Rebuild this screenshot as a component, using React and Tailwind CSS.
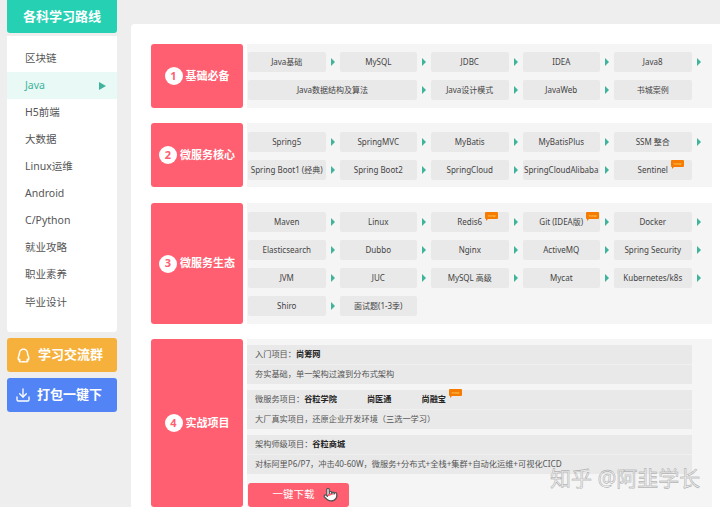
import { Download, Pointer } from 'lucide-react';
import { RiQqLine } from 'react-icons/ri';

const menu = ['区块链', 'Java', 'H5前端', '大数据', 'Linux运维', 'Android', 'C/Python', '就业攻略', '职业素养', '毕业设计'];

const basics = [
  { t: 'Java基础' }, { t: 'MySQL' }, { t: 'JDBC' }, { t: 'IDEA' }, { t: 'Java8' },
  { t: 'Java数据结构及算法', wide: true }, { t: 'Java设计模式' }, { t: 'JavaWeb' }, { t: '书城案例', last: true },
];

const core = [
  { t: 'Spring5' }, { t: 'SpringMVC' }, { t: 'MyBatis' }, { t: 'MyBatisPlus' }, { t: 'SSM 整合' },
  { t: 'Spring Boot1 (经典)' }, { t: 'Spring Boot2' }, { t: 'SpringCloud' }, { t: 'SpringCloudAlibaba' }, { t: 'Sentinel', hot: true, last: true },
];

const eco = [
  { t: 'Maven' }, { t: 'Linux' }, { t: 'Redis6', hot: true }, { t: 'Git (IDEA版)', hot: true }, { t: 'Docker' },
  { t: 'Elasticsearch' }, { t: 'Dubbo' }, { t: 'Nginx' }, { t: 'ActiveMQ' }, { t: 'Spring Security' },
  { t: 'JVM' }, { t: 'JUC' }, { t: 'MySQL 高级' }, { t: 'Mycat' }, { t: 'Kubernetes/k8s' },
  { t: 'Shiro' }, { t: '面试题(1-3季)', last: true },
];

function Hot() {
  return (
    <span className="absolute left-full ml-[3px] -top-[4px] w-[13px] h-[7px] rounded-[1px] bg-[#f57c00] text-[4px] leading-[7px] font-normal text-center text-[#ffd36b]">
      new
      <span className="absolute left-[1px] top-full w-0 h-0 border-t-[2px] border-t-[#f57c00] border-r-[2px] border-r-transparent" />
    </span>
  );
}

function Tag({ t, wide, hot, last }) {
  return (
    <div className={`flex items-center h-[20px] ${wide ? 'col-span-2' : ''}`}>
      <div className="flex-1 h-full flex items-center justify-center bg-[#e9e9e9] rounded-[2px] text-[8px] text-[#444] whitespace-nowrap">
        <span className="relative">
          {t}
          {hot && <Hot />}
        </span>
      </div>
      <div className="w-[14px] flex justify-center">
        {!last && <span className="w-0 h-0 border-y-[4px] border-y-transparent border-l-[4px] border-l-[#3fb39b]" />}
      </div>
    </div>
  );
}

function Label({ n, text }) {
  return (
    <div className="w-[92px] shrink-0 bg-[#ff5f70] rounded-[3px] flex items-center justify-center gap-[3px]">
      <span className="w-[18px] h-[18px] rounded-full bg-white text-[#ff5f70] text-[11px] font-bold flex items-center justify-center">{n}</span>
      <span className="text-[11px] font-bold text-white">{text}</span>
    </div>
  );
}

function Section({ n, text, items, className = '', panel = 'pt-[8px] pb-[8px]' }) {
  return (
    <section className={`flex gap-[4px] ${className}`}>
      <Label n={n} text={text} />
      <div className={`w-[465px] bg-[#f5f5f5] pl-[1px] grid grid-cols-[repeat(5,91.5px)] gap-y-[8px] content-start ${panel}`}>
        {items.map((it) => (
          <Tag key={it.t} {...it} />
        ))}
      </div>
    </section>
  );
}

function Project({ children, desc }) {
  return (
    <div className="w-[445px] h-[39px] bg-[#e9e9e9] text-[8.2px] text-[#555]">
      <div className="h-[20px] px-[8px] flex items-center border-b border-[#f0f0f0]">{children}</div>
      <div className="h-[19px] px-[8px] flex items-center">{desc}</div>
    </div>
  );
}

export default function App() {
  return (
    <div className="relative flex h-[507px] w-[720px] overflow-hidden bg-[#eeeeee] font-['Noto_Sans','Noto_Sans_CJK_SC',sans-serif]">
      <aside className="ml-[7px] w-[110px] shrink-0">
        <div className="h-[33px] bg-[#26d0b2] rounded-b-[3px] flex items-center justify-center text-[13px] font-bold text-white">
          各科学习路线
        </div>
        <ul className="mt-[3px] h-[296px] pt-[9px] bg-white rounded-b-[3px]">
          {menu.map((m) => (
            <li
              key={m}
              className={`h-[27.1px] pl-[18px] pr-[11px] flex items-center justify-between text-[10.5px] ${
                m === 'Java' ? 'bg-[#e9f9f6] text-[#3fb39b]' : 'text-[#555]'
              }`}
            >
              {m}
              {m === 'Java' && <span className="w-0 h-0 border-y-[4px] border-y-transparent border-l-[7px] border-l-[#3fb39b]" />}
            </li>
          ))}
        </ul>
        <div className="mt-[6px] h-[34px] bg-[#f6b13d] rounded-[3px] flex items-center gap-[6px] pl-[8px] text-white text-[13px] font-bold">
          <RiQqLine size={17} />
          学习交流群
        </div>
        <div className="mt-[6px] h-[34px] bg-[#5284f5] rounded-[3px] flex items-center gap-[6px] pl-[8px] text-white text-[13px] font-bold">
          <Download size={16} />
          打包一键下
        </div>
      </aside>

      <main className="ml-[14px] mt-[24px] flex-1 bg-white rounded-tl-[4px] pl-[20px] pt-[20px] flex flex-col">
        <Section n={1} text="基础必备" items={basics} />
        <Section n={2} text="微服务核心" items={core} className="mt-[15px]" panel="pt-[9px] pb-[7px]" />
        <Section n={3} text="微服务生态" items={eco} className="mt-[16px] h-[121px]" panel="pt-[9px] pb-[5px]" />
        <section className="flex gap-[4px] h-[168px] mt-[15px] shrink-0">
          <Label n={4} text="实战项目" />
          <div className="w-[465px] bg-[#f5f5f5] pt-[6px] flex flex-col gap-[6px]">
            <Project desc="夯实基础，单一架构过渡到分布式架构">
              入门项目：<b className="text-[#222]">尚筹网</b>
            </Project>
            <Project desc="大厂真实项目，还原企业开发环境（三选一学习）">
              微服务项目：<b className="text-[#222]">谷粒学院</b>
              <b className="text-[#222] ml-[30px]">尚医通</b>
              <b className="relative text-[#222] ml-[30px]">
                尚融宝
                <Hot />
              </b>
            </Project>
            <Project desc="对标阿里P6/P7，冲击40-60W，微服务+分布式+全栈+集群+自动化运维+可视化CICD">
              架构师级项目：<b className="text-[#222]">谷粒商城</b>
            </Project>
            <button className="relative shrink-0 mt-[3px] ml-[1px] w-[101px] h-[24px] bg-[#ff5f70] rounded-[3px] text-white text-[10.5px] pr-[10px] text-center">
              一键下载
              <Pointer size={15} className="absolute right-[11px] top-[4px] text-white fill-white stroke-[#555]" />
            </button>
          </div>
        </section>
      </main>

      <div className="absolute left-[550px] top-[464px] text-[21px] leading-[28px] text-[#eeeeee] whitespace-nowrap [-webkit-text-stroke:0.4px_#999]">
        知乎 @阿韭学长
      </div>
    </div>
  );
}
